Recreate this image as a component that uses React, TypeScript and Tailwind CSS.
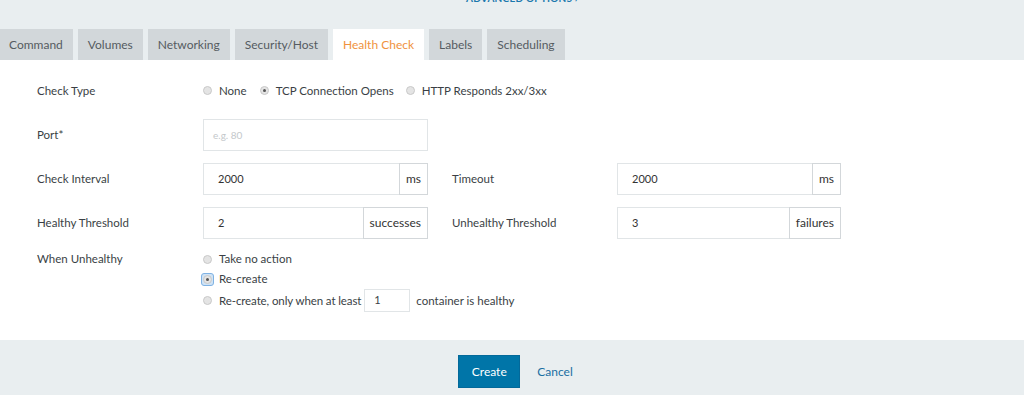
const tabs = ['Command', 'Volumes', 'Networking', 'Security/Host', 'Health Check', 'Labels', 'Scheduling'];

function Radio({ checked = false, focused = false }: { checked?: boolean; focused?: boolean }) {
    const dot = (
        <span className="w-[9px] h-[9px] rounded-full bg-[#e4e4e4] border border-[#c9c9c9] flex items-center justify-center shrink-0">
            {checked && <span className="w-[3px] h-[3px] rounded-full bg-[#555]" />}
        </span>
    );
    if (focused) {
        return (
            <span className="w-[13px] h-[13px] rounded-[3px] bg-[#cfe3f6] border border-[#7fb2e3] flex items-center justify-center shrink-0 -ml-[2px] -mr-[2px]">
                {dot}
            </span>
        );
    }
    return dot;
}

function AddonInput({ value, unit, width }: { value: string; unit: string; width: string }) {
    return (
        <div className={`flex h-[32px] ${width}`}>
            <div className="flex-1 border border-[#e1e5e7] border-r-0 flex items-center pl-[14px] text-[11px] text-[#333]">
                {value}
            </div>
            <div className="border border-[#d3d7da] bg-white flex items-center px-[6px] text-[12px] text-[#333]">
                {unit}
            </div>
        </div>
    );
}

export default function App() {
    return (
        <div className="w-[1024px] h-[395px] bg-[#e9eef0] overflow-hidden text-[#3b4046]" style={{ fontFamily: 'Lato, "Open Sans", sans-serif' }}>
            {/* advanced options link, cut off at the top */}
            <div className="h-[29px] flex justify-center pl-[20px]">
                <span className="-mt-[7px] text-[10px] font-bold tracking-wide text-[#1b78ad] h-[11px] leading-[11px]">
                    ADVANCED OPTIONS ›
                </span>
            </div>

            {/* tabs */}
            <div className="flex gap-[5px] h-[31px] -ml-[1px]">
                {tabs.map((t) => (
                    <div
                        key={t}
                        className={`px-[10px] flex items-center text-[12px] ${
                            t === 'Health Check' ? 'bg-white text-[#f0923e]' : 'bg-[#d2d7da] text-[#555b61]'
                        }`}
                    >
                        {t}
                    </div>
                ))}
            </div>

            {/* form body */}
            <div className="bg-white h-[280px] pt-[15px] pl-[37px] text-[11.5px] text-[#3a3f45]">
                <div className="flex h-[31px] items-center">
                    <div className="w-[166px]">Check Type</div>
                    <div className="flex items-center">
                        <Radio />
                        <span className="ml-[7px] mr-[13px]">None</span>
                        <Radio checked />
                        <span className="ml-[7px] mr-[12px]">TCP Connection Opens</span>
                        <Radio />
                        <span className="ml-[7px]">HTTP Responds 2xx/3xx</span>
                    </div>
                </div>

                <div className="flex h-[32px] items-center mt-[13px]">
                    <div className="w-[166px]">Port*</div>
                    <div className="w-[225px] h-[32px] border border-[#e1e5e7] flex items-center pl-[9px] text-[10px] text-[#c4c8cb]">
                        e.g. 80
                    </div>
                </div>

                <div className="flex h-[32px] items-center mt-[12px]">
                    <div className="w-[166px]">Check Interval</div>
                    <AddonInput value="2000" unit="ms" width="w-[225px]" />
                    <div className="w-[165px] ml-[24px]">Timeout</div>
                    <AddonInput value="2000" unit="ms" width="w-[224px]" />
                </div>

                <div className="flex h-[32px] items-center mt-[12px]">
                    <div className="w-[166px]">Healthy Threshold</div>
                    <AddonInput value="2" unit="successes" width="w-[225px]" />
                    <div className="w-[165px] ml-[24px]">Unhealthy Threshold</div>
                    <AddonInput value="3" unit="failures" width="w-[224px]" />
                </div>

                <div className="flex mt-[10px]">
                    <div className="w-[166px] h-[20px] flex items-center">When Unhealthy</div>
                    <div className="flex flex-col">
                        <div className="h-[20px] flex items-center">
                            <Radio />
                            <span className="ml-[7px]">Take no action</span>
                        </div>
                        <div className="h-[20px] flex items-center">
                            <Radio checked focused />
                            <span className="ml-[7px]">Re-create</span>
                        </div>
                        <div className="h-[23px] flex items-center">
                            <Radio />
                            <span className="ml-[7px] tracking-[-0.1px]">Re-create, only when at least</span>
                            <div className="w-[46px] h-[23px] border border-[#e1e5e7] ml-[3px] flex items-center pl-[9px] text-[11px]">
                                1
                            </div>
                            <span className="ml-[6px]">container is healthy</span>
                        </div>
                    </div>
                </div>
            </div>

            {/* footer */}
            <div className="h-[55px] flex items-start pt-[15px] justify-center pl-[7px] gap-[17px]">
                <button className="w-[62px] h-[33px] bg-[#0075a8] text-white text-[12px] border border-[#03699a]">
                    Create
                </button>
                <span className="text-[12px] text-[#1a6fa3] h-[33px] flex items-center">Cancel</span>
            </div>
        </div>
    );
}
